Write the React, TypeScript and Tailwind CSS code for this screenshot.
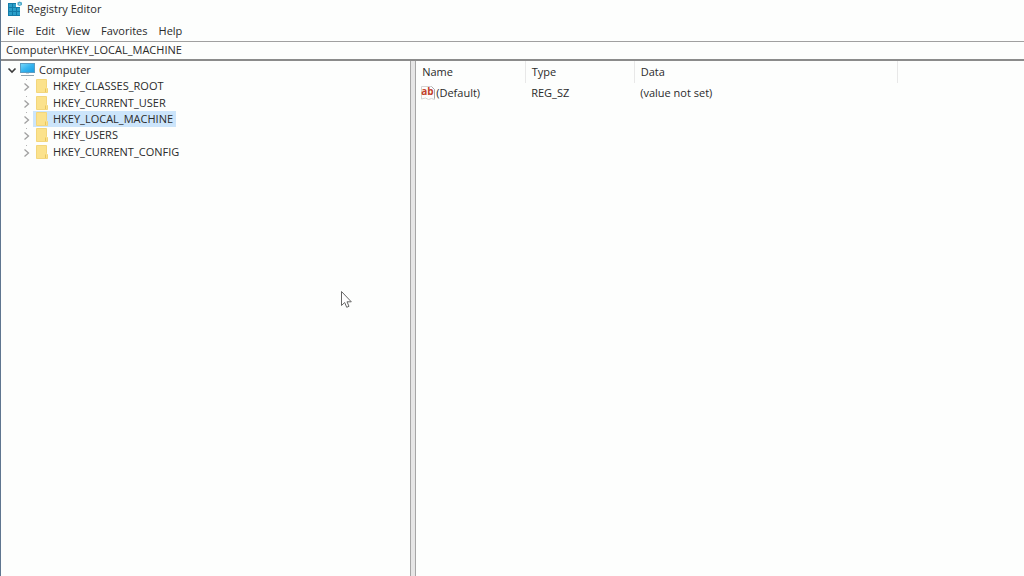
import React, { useState } from "react";

const menus = ["File", "Edit", "View", "Favorites", "Help"];

const hives = [
  "HKEY_CLASSES_ROOT",
  "HKEY_CURRENT_USER",
  "HKEY_LOCAL_MACHINE",
  "HKEY_USERS",
  "HKEY_CURRENT_CONFIG",
];

function RegistryIcon() {
  return (
    <svg className="size-4 shrink-0" viewBox="0 0 16 16" aria-hidden="true">
      <path d="M1 2h8v4h4v9H1z" fill="#137ba8" />
      <g fill="#2a9fc9">
        <path d="M2 3h3v3H2zM6 3h3v3H6zM2 7h3v3H2zM6 7h3v3H6zM10 7h3v3h-3zM2 11h3v3H2zM6 11h3v3H6zM10 11h3v3h-3z" />
      </g>
      <path d="M12.500 .5L15 1.500v2.500L12.500 5 10.500 4V1.500z" fill="#4fa9c8" />
      <path d="M12.500 2l1 .5v1l-1 .5-1-1z" fill="#a5dff0" />
    </svg>
  );
}

function ComputerIcon() {
  return (
    <svg className="h-4 w-4 shrink-0" viewBox="0 0 16 16" aria-hidden="true">
      <defs>
        <linearGradient id="screen" x1="0" y1="0" x2="1" y2="1">
          <stop offset="0" stopColor="#7ad9fa" />
          <stop offset="0.5" stopColor="#35b4ef" />
          <stop offset="1" stopColor="#189be0" />
        </linearGradient>
      </defs>
      <rect x="0.500" y="1.500" width="14" height="9" fill="url(#screen)" stroke="#5b9cc2" />
      <path d="M6 11h3v1H6z" fill="#c9d5dc" />
      <path d="M1 13h13v1H1z" fill="#8fa3b0" />
    </svg>
  );
}

function FolderIcon() {
  return (
    <svg className="h-4 w-3 shrink-0" viewBox="0 0 12 16" aria-hidden="true">
      <path d="M0.500 1.500h10v8l1 1v4h-11z" fill="#fbe28c" stroke="#f3d67c" />
      <path d="M9.500 10.500v3.500" stroke="#e9c65f" />
    </svg>
  );
}

function StringValueIcon() {
  return (
    <svg className="h-4 w-4 shrink-0" viewBox="0 0 16 16" aria-hidden="true">
      <path d="M1.500 1.500h10l3 3v10l-3-1-3 1-3-1.500-4 1z" fill="#fdfdfd" stroke="#d4d4d4" />
      <path d="M11.500 1.500l3 3v9" fill="none" stroke="#aaaaaa" />
      <text
        x="7.500"
        y="10"
        textAnchor="middle"
        fill="#c2412c"
        fontSize="10"
        fontWeight="700"
        fontFamily="Open Sans, sans-serif"
      >
        ab
      </text>
    </svg>
  );
}

function Chevron({ open = false }: { open?: boolean }) {
  return open ? (
    <svg className="h-3 w-3 shrink-0" viewBox="0 0 12 12" aria-hidden="true">
      <path d="M2.500 4.500L6 8l3.500-3.500" fill="none" stroke="#3c3c3c" strokeWidth="1.600" />
    </svg>
  ) : (
    <svg className="h-4 w-3 shrink-0" viewBox="0 0 12 16" aria-hidden="true">
      <path d="M5 1h1v1H5z" fill="#b4b4b4" />
      <path d="M3.500 5.500l4 3.500-4 3.500" fill="none" stroke="#a0a0a0" strokeWidth="1.300" />
    </svg>
  );
}

export default function App() {
  const [selected, setSelected] = useState("HKEY_LOCAL_MACHINE");

  return (
    <div className="flex min-h-screen flex-col border-l border-[#5f7690] bg-[#fdfefd] font-['Open_Sans',sans-serif] text-[11px] leading-4 text-[#2b2b2b]">
      <header className="flex h-[18px] items-center gap-1 pl-1.5">
        <RegistryIcon />
        <h1>Registry Editor</h1>
      </header>

      <nav className="flex h-[23px] items-center gap-[11px] pt-0.5 pl-1.5">
        {menus.map((name) => (
          <button key={name} type="button">
            {name}
          </button>
        ))}
      </nav>

      <input
        aria-label="Registry path"
        className="h-[18px] w-full border-t border-[#a0a0a0] px-[5px] pb-0.5 outline-none"
        value={"Computer\\" + selected}
        readOnly
      />

      <main className="flex grow border-t-2 border-[#8b8b8b]">
        <section className="w-2/5 shrink-0 pt-px" aria-label="Registry keys">
          <ul role="tree" className="grid h-[98px] grid-rows-6">
            <li role="treeitem" aria-expanded="true" className="flex items-center">
              <button type="button" className="flex items-center gap-0.5 pl-[5px]">
                <Chevron open />
                <ComputerIcon />
                <span className="pl-px">Computer</span>
              </button>
            </li>
            {hives.map((hive) => (
              <li key={hive} role="treeitem" aria-selected={hive === selected} className="flex pl-5">
                <button type="button" className="flex items-center" onClick={() => setSelected(hive)}>
                  <Chevron />
                  <span
                    className={
                      hive === selected
                        ? "flex items-center gap-[5px] bg-[#cce5fb] px-[3px]"
                        : "flex items-center gap-[5px] px-[3px]"
                    }
                  >
                    <FolderIcon />
                    <span>{hive}</span>
                  </span>
                </button>
              </li>
            ))}
          </ul>
        </section>

        <div className="w-1.5 shrink-0 border-x border-[#a6a6a6] bg-[#e6e6e6]" />

        <section className="grow" aria-label="Values">
          <table className="w-full table-fixed border-collapse text-left">
            <colgroup>
              <col className="w-[109px]" />
              <col className="w-[109px]" />
              <col className="w-[263px]" />
              <col />
            </colgroup>
            <thead>
              <tr className="h-[22px]">
                <th className="border-r border-[#e8e8e8] px-1.5 font-normal">Name</th>
                <th className="border-r border-[#e8e8e8] px-1.5 font-normal">Type</th>
                <th className="border-r border-[#e8e8e8] px-1.5 font-normal">Data</th>
                <td />
              </tr>
            </thead>
            <tbody>
              <tr className="h-5">
                <td className="pl-1">
                  <span className="flex items-center">
                    <StringValueIcon />
                    (Default)
                  </span>
                </td>
                <td className="px-1.5">REG_SZ</td>
                <td className="px-1.5">(value not set)</td>
                <td />
              </tr>
            </tbody>
          </table>
        </section>
      </main>

      <svg
        className="pointer-events-none absolute top-[290px] left-[340px] h-[19px] w-3"
        viewBox="0 0 12 19"
        aria-hidden="true"
      >
        <path
          d="M1.500 1.500v14l3.200-3 2 4.800 2.300-1-2-4.500h4.300z"
          fill="#ffffff"
          stroke="#666666"
        />
      </svg>
    </div>
  );
}
